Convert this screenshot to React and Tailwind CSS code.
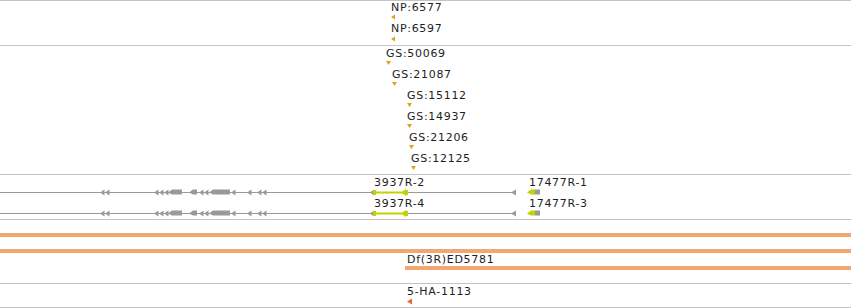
const GOLD = '#e2a11c'
const GRAY = '#999999'
const LIME = '#c2d100'
const ORANGE = '#f5a571'

// a feature label, placed by its baseline in page coordinates
function Label({ x, base, top, children }) {
  return (
    <span
      className="absolute whitespace-nowrap leading-none tracking-[0.7px] text-[#1e1e1e]"
      style={{ left: x, top: base - 9 - top }}
    >
      {children}
    </span>
  )
}

// svg layer drawn in page coordinates, shifted to the track
function Layer({ top, children }) {
  return (
    <svg className="absolute inset-0 h-full w-full" aria-hidden="true">
      <g transform={`translate(0 ${-top})`}>{children}</g>
    </svg>
  )
}

const leftTri = (x, y, w, h, fill) => (
  <polygon key={`${x}-${y}`} points={`${x},${y} ${x + w},${y - h / 2} ${x + w},${y + h / 2}`} fill={fill} />
)
const downTri = (x, y, fill) => (
  <polygon key={`${x}-${y}`} points={`${x},${y} ${x + 5},${y} ${x + 2.5},${y + 4}`} fill={fill} />
)
const arrowBlock = (x1, x2, y, fill) => (
  <polygon key={`${x1}-${y}`} points={`${x1},${y} ${x1 + 4},${y - 3} ${x2},${y - 3} ${x2},${y + 2} ${x1 + 4},${y + 2}`} fill={fill} />
)

const GS = [
  ['GS:50069', 386, 57],
  ['GS:21087', 392, 78],
  ['GS:15112', 407, 99],
  ['GS:14937', 407, 120],
  ['GS:21206', 409, 141],
  ['GS:12125', 411, 162],
]

function GeneRow({ y }) {
  return (
    <g>
      <line x1="0" x2="512" y1={y + 0.5} y2={y + 0.5} stroke={GRAY} strokeWidth="1" />
      {[100, 105, 154, 159, 164, 199, 204, 231, 247, 257, 262].map((x) => leftTri(x, y + 0.5, 4.5, 6, GRAY))}
      {arrowBlock(168, 182, y + 0.5, GRAY)}
      {arrowBlock(189, 197, y + 0.5, GRAY)}
      {arrowBlock(209, 230, y + 0.5, GRAY)}
      {leftTri(511, y + 0.5, 5, 6, GRAY)}
      {leftTri(370, y + 0.5, 4, 6, GRAY)}
      <rect x="373" y={y - 2} width="3" height="5" fill={LIME} />
      <rect x="376" y={y - 0.5} width="26" height="2" fill={LIME} />
      {leftTri(401, y + 0.5, 5, 7, LIME)}
      <rect x="405" y={y - 2} width="3" height="5" fill={LIME} />
      {arrowBlock(527, 535, y + 0.5, LIME)}
      <rect x="535" y={y - 2.5} width="5" height="5" fill={GRAY} />
    </g>
  )
}

export default function App() {
  return (
    <div className="w-[851px] h-[308px] overflow-hidden bg-white font-['DejaVu_Sans',sans-serif] text-[11px]">
      {/* NP track */}
      <div className="relative h-[45px] border-t border-[#c4c4c4]">
        <Label x={391} base={11} top={1}>NP:6577</Label>
        <Label x={391} base={32} top={1}>NP:6597</Label>
        <Layer top={1}>
          {leftTri(391, 17, 4, 5, GOLD)}
          {leftTri(391, 39, 4, 5, GOLD)}
        </Layer>
      </div>

      {/* GS track */}
      <div className="relative h-[129px] border-t border-[#c4c4c4]">
        {GS.map(([name, x, base]) => (
          <Label key={name} x={x} base={base} top={46}>{name}</Label>
        ))}
        <Layer top={46}>
          {GS.map(([name, x, base]) => downTri(x, base + 4, GOLD))}
        </Layer>
      </div>

      {/* gene models */}
      <div className="relative h-[45px] border-t border-[#c4c4c4]">
        <Layer top={175}>
          <GeneRow y={192} />
          <GeneRow y={213} />
        </Layer>
        <Label x={374} base={186} top={175}>3937R-2</Label>
        <Label x={529} base={186} top={175}>17477R-1</Label>
        <Label x={374} base={207} top={175}>3937R-4</Label>
        <Label x={529} base={207} top={175}>17477R-3</Label>
      </div>

      {/* deficiencies */}
      <div className="relative h-[64px] border-t border-[#c4c4c4]">
        <Layer top={220}>
          <rect x="0" y="233" width="851" height="4" fill={ORANGE} />
          <rect x="0" y="249" width="851" height="4" fill={ORANGE} />
          <rect x="405" y="266" width="446" height="4" fill={ORANGE} />
        </Layer>
        <Label x={407} base={263} top={220}>Df(3R)ED5781</Label>
      </div>

      {/* insertions */}
      <div className="relative h-[25px] border-y border-[#c4c4c4]">
        <Label x={407} base={295} top={284}>5-HA-1113</Label>
        <Layer top={284}>
          {leftTri(407, 301.5, 5, 6, '#f0603c')}
        </Layer>
      </div>
    </div>
  )
}
